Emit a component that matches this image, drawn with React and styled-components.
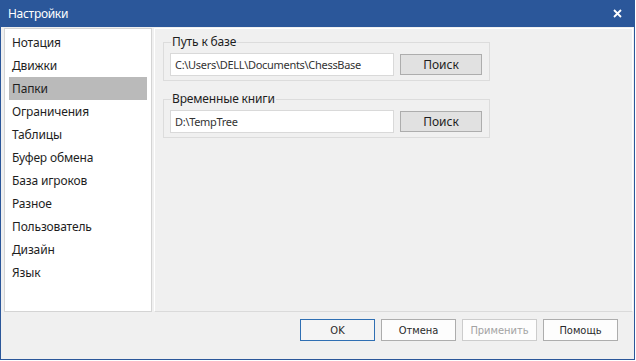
import styled, { createGlobalStyle } from 'styled-components'

const GlobalStyle = createGlobalStyle`
    html, body {
        margin: 0;
        padding: 0;
        background: #ffffff;
        font-family: "Segoe UI", "Noto Sans", Roboto, sans-serif;
        font-size: 12px;
        color: #1e1e1e;
    }
`

const Window = styled.div`
    box-sizing: border-box;
    width: 635px;
    height: 360px;
    border: 1px solid #2b579a;
    border-top: none;
    background: #f0f0f0;
    display: flex;
    flex-direction: column;
`

const TitleBar = styled.div`
    height: 27px;
    background: #2b579a;
    color: #ffffff;
    display: flex;
    align-items: center;
    justify-content: space-between;
    padding: 0 12px 0 7px;
    font-size: 12px;
    letter-spacing: -0.3px;
`

const Close = styled.div`
    display: flex;
    align-items: center;
`

const Body = styled.div`
    flex: 1;
    display: flex;
    gap: 2px;
    padding: 1px 1px 0 3px;
    min-height: 0;
`

const Sidebar = styled.div`
    box-sizing: border-box;
    width: 148px;
    height: 284px;
    background: #ffffff;
    border: 1px solid #d4d4d4;
    padding: 2px 4px;
    display: flex;
    flex-direction: column;
`

const NavItem = styled.div`
    height: 23px;
    line-height: 23px;
    padding-left: 3px;
    letter-spacing: -0.15px;
    background: ${p => (p.$active ? '#bababa' : 'transparent')};
`

const Content = styled.div`
    box-sizing: border-box;
    flex: 1;
    height: 284px;
    background: #f0f0f0;
    border: 1px solid #ffffff;
    border-bottom: 1px solid #dadada;
    padding: 5px 0 0 8px;
    display: flex;
    flex-direction: column;
    gap: 10px;
`

const Group = styled.fieldset`
    box-sizing: border-box;
    width: 327px;
    margin: 0;
    border: 1px solid #dcdcdc;
    padding: 3px 7px 4px 6px;
    display: flex;
    align-items: center;
    justify-content: space-between;
`

const Legend = styled.legend`
    padding: 0 1px;
    margin-left: 1px;
    font-size: 12px;
    line-height: 16px;
    letter-spacing: -0.15px;
`

const PathField = styled.div`
    box-sizing: border-box;
    width: 224px;
    height: 23px;
    background: #ffffff;
    border: 1px solid #d9d9d9;
    padding-left: 4px;
    font-size: 11px;
    letter-spacing: -0.3px;
    color: #333333;
    line-height: 21px;
    white-space: nowrap;
    overflow: hidden;
`

const BrowseButton = styled.div`
    box-sizing: border-box;
    width: 82px;
    height: 21px;
    background: #e1e1e1;
    border: 1px solid #adadad;
    display: flex;
    align-items: center;
    justify-content: center;
`

const Footer = styled.div`
    display: flex;
    justify-content: flex-end;
    gap: 6px;
    padding: 7px 16px 18px 0;
`

const DialogButton = styled.div`
    box-sizing: border-box;
    width: 75px;
    height: 22px;
    background: ${p => (p.$primary ? '#f4f4f4' : '#fdfdfd')};
    border: 1px solid ${p => (p.$primary ? '#2f6fb3' : p.$disabled ? '#cccccc' : '#adadad')};
    color: ${p => (p.$disabled ? '#a3a3a3' : '#2a2a2a')};
    font-family: "DejaVu Sans", sans-serif;
    font-stretch: condensed;
    font-size: 11px;
    display: flex;
    align-items: center;
    justify-content: center;
`

const sections = [
    'Нотация', 'Движки', 'Папки', 'Ограничения', 'Таблицы', 'Буфер обмена',
    'База игроков', 'Разное', 'Пользователь', 'Дизайн', 'Язык',
]

const folders = [
    { label: 'Путь к базе', path: 'C:\\Users\\DELL\\Documents\\ChessBase' },
    { label: 'Временные книги', path: 'D:\\TempTree' },
]

const App = () => {
    return (
        <>
            <GlobalStyle />
            <Window>
                <TitleBar>
                    <span>Настройки</span>
                    <Close>
                        <svg width="9" height="9" viewBox="0 0 9 9">
                            <path d="M1 1L8 8M8 1L1 8" stroke="#fff" strokeWidth="1.8" />
                        </svg>
                    </Close>
                </TitleBar>
                <Body>
                    <Sidebar>
                        {sections.map(s => (
                            <NavItem key={s} $active={s === 'Папки'}>{s}</NavItem>
                        ))}
                    </Sidebar>
                    <Content>
                        {folders.map(f => (
                            <Group key={f.label}>
                                <Legend>{f.label}</Legend>
                                <PathField>{f.path}</PathField>
                                <BrowseButton>Поиск</BrowseButton>
                            </Group>
                        ))}
                    </Content>
                </Body>
                <Footer>
                    <DialogButton $primary>OK</DialogButton>
                    <DialogButton>Отмена</DialogButton>
                    <DialogButton $disabled>Применить</DialogButton>
                    <DialogButton>Помощь</DialogButton>
                </Footer>
            </Window>
        </>
    )
}

export default App
